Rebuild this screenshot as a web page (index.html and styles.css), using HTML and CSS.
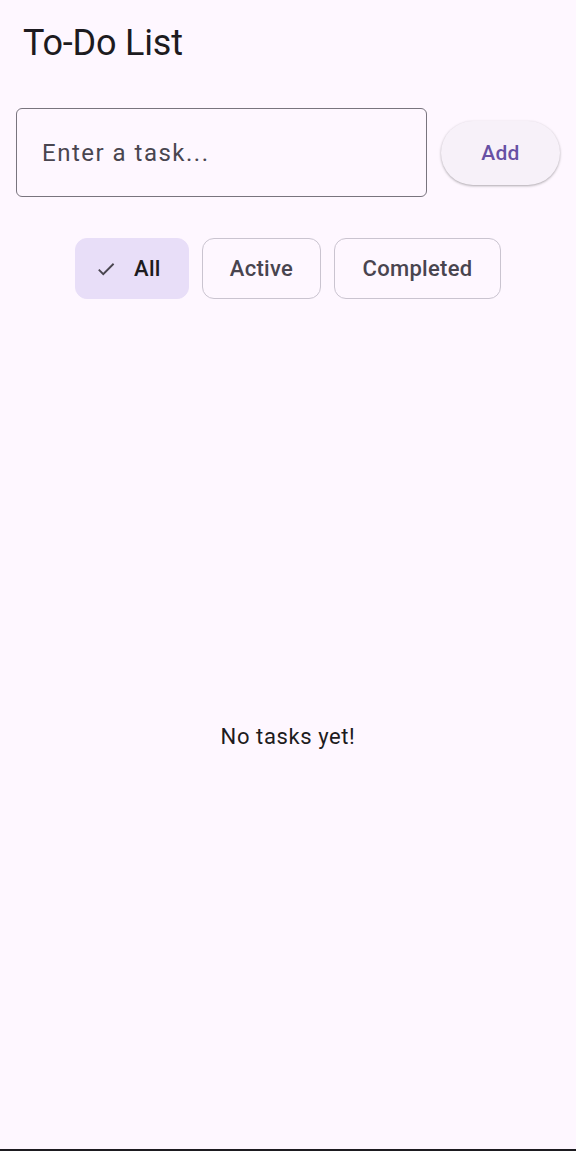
FILE: index.html
```html
<!DOCTYPE html>
<html>
<head>
<meta charset="utf-8">
<link rel="stylesheet" href="styles.css">
</head>
<body>
<div class="app">
  <header class="appbar"><h1 class="title">To-Do List</h1></header>
  <div class="input-row">
    <div class="field"><span class="placeholder">Enter a task...</span></div>
    <button class="add-btn">Add</button>
  </div>
  <div class="chips">
    <div class="chip selected">
      <svg class="check" viewBox="0 0 24 24" width="22" height="22"><path d="M9 16.17L4.83 12l-1.42 1.41L9 19 21 7l-1.41-1.41z" fill="#49454F"/></svg>
      <span>All</span>
    </div>
    <div class="chip">Active</div>
    <div class="chip">Completed</div>
  </div>
  <main class="empty"><p class="empty-text">No tasks yet!</p></main>
  <div class="bottom-line"></div>
</div>
</body>
</html>
```
FILE: styles.css
```css
* { box-sizing: border-box; }
html, body { margin: 0; padding: 0; }
body {
  background: #fef7ff;
  font-family: Roboto, "Noto Sans", sans-serif;
  color: #1d1b20;
}
.app {
  height: 1151px;
  display: flex;
  flex-direction: column;
}
.appbar {
  height: 84px;
  padding: 0 0 0 23px;
  display: flex;
  align-items: center;
}
.title {
  margin: 0;
  font-size: 36px;
  font-weight: 400;
  letter-spacing: -0.2px;
  color: #1d1b20;
  line-height: 1;
  padding-top: 2px;
}
.input-row {
  display: flex;
  align-items: center;
  padding: 24px 16px 0 16px;
  gap: 14px;
}
.field {
  flex: 0 0 411px;
  height: 89px;
  border: 1.5px solid #79747e;
  border-radius: 6px;
  display: flex;
  align-items: center;
  padding-left: 25px;
}
.placeholder {
  font-size: 24px;
  letter-spacing: 1.5px;
  color: #49454f;
}
.add-btn {
  width: 119px;
  height: 64px;
  border: none;
  border-radius: 32px;
  background: #f7f1f9;
  color: #6750a4;
  font-family: Roboto, "Noto Sans", sans-serif;
  font-size: 21px;
  font-weight: 500;
  letter-spacing: 0.3px;
  box-shadow: 0 1px 3px rgba(0,0,0,0.22), 0 1px 2px rgba(0,0,0,0.12);
  padding: 0;
}
.chips {
  display: flex;
  justify-content: center;
  gap: 13px;
  padding-top: 41px;
}
.chip {
  height: 61px;
  border: 1.5px solid #cac4d0;
  border-radius: 12px;
  display: flex;
  align-items: center;
  justify-content: center;
  font-size: 22px;
  font-weight: 500;
  letter-spacing: 0.3px;
  color: #49454f;
}
.chip:nth-child(2) { width: 119px; }
.chip:nth-child(3) { width: 167px; }
.chip.selected {
  width: 114px;
  background: #e8def8;
  border-color: #e8def8;
  justify-content: flex-start;
  padding: 0 0 0 19px;
  gap: 17px;
  color: #1d1b20;
}
.check { display: block; }
.empty {
  flex: 1;
  display: flex;
  align-items: center;
  justify-content: center;
  padding-top: 24px;
}
.empty-text {
  margin: 0;
  font-size: 22px;
  letter-spacing: 0.6px;
  color: #1d1b20;
}
.bottom-line {
  height: 2px;
  background: #1d1b20;
}
```
